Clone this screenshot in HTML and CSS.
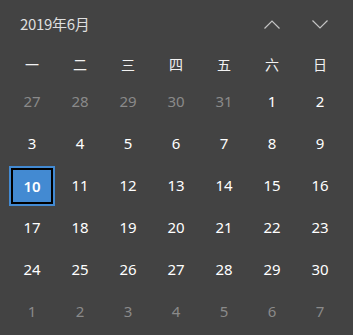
FILE: index.html
```html
<!DOCTYPE html>
<html lang="zh-CN">
<head>
<meta charset="utf-8">
<link rel="stylesheet" href="styles.css">
</head>
<body>
<div class="cal">
  <div class="header">
    <div class="title">2019年6月</div>
    <div class="navs">
      <div class="nav"><svg width="16" height="9" viewBox="0 0 16 9"><polyline points="0.5,8.5 8,1 15.5,8.5" fill="none" stroke="#c4c4c4" stroke-width="1.2"/></svg></div>
      <div class="nav"><svg width="16" height="9" viewBox="0 0 16 9"><polyline points="0.5,0.5 8,8 15.5,0.5" fill="none" stroke="#c4c4c4" stroke-width="1.2"/></svg></div>
    </div>
  </div>
  <div class="grid weekdays">
    <div class="wd">一</div><div class="wd">二</div><div class="wd">三</div><div class="wd">四</div><div class="wd">五</div><div class="wd">六</div><div class="wd">日</div>
  </div>
  <div class="grid days">
    <div class="d out">27</div><div class="d out">28</div><div class="d out">29</div><div class="d out">30</div><div class="d out">31</div><div class="d">1</div><div class="d">2</div>
    <div class="d">3</div><div class="d">4</div><div class="d">5</div><div class="d">6</div><div class="d">7</div><div class="d">8</div><div class="d">9</div>
    <div class="d"><span class="sel">10</span></div><div class="d">11</div><div class="d">12</div><div class="d">13</div><div class="d">14</div><div class="d">15</div><div class="d">16</div>
    <div class="d">17</div><div class="d">18</div><div class="d">19</div><div class="d">20</div><div class="d">21</div><div class="d">22</div><div class="d">23</div>
    <div class="d">24</div><div class="d">25</div><div class="d">26</div><div class="d">27</div><div class="d">28</div><div class="d">29</div><div class="d">30</div>
    <div class="d out">1</div><div class="d out">2</div><div class="d out">3</div><div class="d out">4</div><div class="d out">5</div><div class="d out">6</div><div class="d out">7</div>
  </div>
</div>
</body>
</html>
```

FILE: styles.css
```css
html, body {
  margin: 0;
  padding: 0;
  background: #424242;
}
.cal {
  width: 353px;
  height: 335px;
  background: #434343;
  font-family: "Noto Sans", "Noto Sans CJK SC", sans-serif;
  color: #ffffff;
}
.header {
  height: 48px;
  display: flex;
  align-items: center;
  justify-content: space-between;
  padding: 0 9px 0 20px;
}
.title {
  font-family: "Noto Sans CJK SC", sans-serif;
  font-size: 15px;
  color: #dedede;
  letter-spacing: -0.3px;
  margin-top: -1px;
}
.navs {
  display: flex;
}
.nav {
  width: 48px;
  height: 48px;
  display: flex;
  align-items: center;
  justify-content: center;
}
.grid {
  display: grid;
  grid-template-columns: repeat(7, 48px);
  padding-left: 8px;
}
.weekdays {
  height: 32px;
}
.wd {
  display: flex;
  align-items: center;
  justify-content: center;
  font-family: "Noto Sans CJK SC", sans-serif;
  font-size: 14px;
  color: #f2f2f2;
}
.days {
  grid-auto-rows: 42px;
}
.d {
  display: flex;
  align-items: center;
  justify-content: center;
  font-size: 15px;
  color: #ffffff;
}
.d.out {
  color: #8a8a8a;
}
.sel {
  box-sizing: border-box;
  width: 46px;
  height: 40px;
  border: 2px solid #438ad2;
  box-shadow: inset 0 0 0 2px #000;
  background: #438ad2;
  display: flex;
  align-items: center;
  justify-content: center;
  font-weight: 600;
  margin-top: 1px;
}
```
